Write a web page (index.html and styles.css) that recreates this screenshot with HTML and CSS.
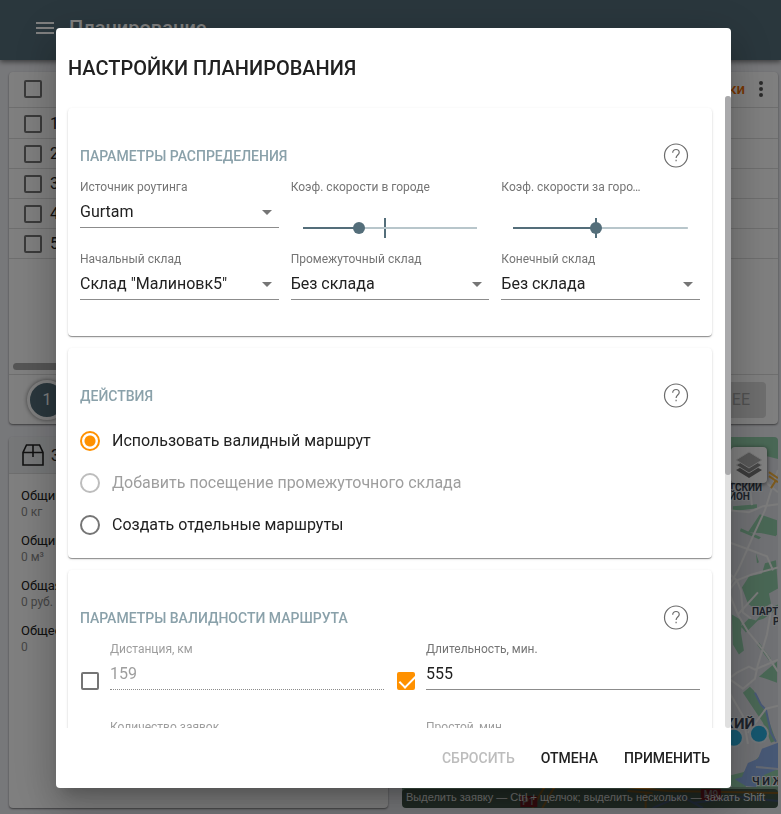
FILE: index.html
```html
<!DOCTYPE html>
<html lang="ru">
<head>
<meta charset="utf-8">
<meta name="viewport" content="width=device-width, initial-scale=1">
<title>Планирование</title>
<link rel="stylesheet" href="styles.css">
</head>
<body>
<div class="app">
  <header class="topbar">
    <button class="menu-button" type="button" aria-label="Меню"><span></span><span></span><span></span></button>
    <h1 class="topbar-title">Планирование</h1>
  </header>
  <main class="workspace">
    <section class="panel orders">
      <div class="orders-head">
        <input class="check" type="checkbox" aria-label="Выбрать все">
        <a class="orders-link" href="#">Заявки</a>
        <button class="more" type="button" aria-label="Ещё"><span></span><span></span><span></span></button>
      </div>
      <table class="orders-table">
        <tbody>
          <tr><td><input class="check" type="checkbox" aria-label="Заявка 1"></td><td>1</td></tr>
          <tr><td><input class="check" type="checkbox" aria-label="Заявка 2"></td><td>2</td></tr>
          <tr><td><input class="check" type="checkbox" aria-label="Заявка 3"></td><td>3</td></tr>
          <tr><td><input class="check" type="checkbox" aria-label="Заявка 4"></td><td>4</td></tr>
          <tr><td><input class="check" type="checkbox" aria-label="Заявка 5"></td><td>5</td></tr>
        </tbody>
      </table>
      <div class="orders-space"><div class="hbar"></div></div>
      <div class="orders-foot">
        <span class="step">1</span>
        <button class="next" type="button">ДАЛЕЕ</button>
      </div>
    </section>
    <div class="lower">
      <section class="panel summary">
        <div class="summary-head">
          <svg width="22" height="22" viewBox="0 0 22 22" fill="none" stroke="#222" stroke-width="1.600"><path d="M1 8.500V21h20V8.500L17.500 1h-13zM1 8.500h20M11 1v12"/></svg>
          <span>Заявки</span>
        </div>
        <dl class="totals">
          <div><dt>Общий вес</dt><dd>0 кг</dd></div>
          <div><dt>Общий объём</dt><dd>0 м³</dd></div>
          <div><dt>Общая стоимость</dt><dd>0 руб.</dd></div>
          <div><dt>Общее количество</dt><dd>0</dd></div>
        </dl>
      </section>
      <section class="map" aria-label="Карта">
        <svg class="map-art" viewBox="0 0 375 371" preserveAspectRatio="xMaxYMax slice">
          <rect width="375" height="371" fill="#e0e2e8"/>
          <g fill="#93cfaa">
            <path d="M300 0h75v23l-12-3-18-6-45 4z"/>
            <path d="M345 96l12-18 17 6v15l-14-2zM354 96l14-3 5-5v12zM330 70l24-2v4l-24 3z"/>
            <path d="M338 92l20 9-2 2-19-8zM346 140l13-3 3-10 11-3 2 28-9 5 2 10-13 8-10-8-6-16zM353 117l3 9-2 1z"/>
            <path d="M329 178l10 6-1 12 3 18-5 4-6-10zM338 190l8-8 7 2 9-10 13-6v4l-14 10-6 2-12 12zM356 206l12 16-2 2-12-16zM356 240l18-15v21l-11-4z"/>
            <path d="M347 250l4 4 12 22 10 28-5 2-8-20-12-18-8-12zM325 348l17 4 5-14 11-12 17-8v-8l-14 5-20 20-16 4zM362 333h13v20l-22-2z"/>
          </g>
          <path d="M332 342l7-2 6-14 10-4 4-10 16-6v26l-14 6-8 12-10-1-10-6z" fill="#8fb0ea"/>
          <path d="M329 346l14 4 6 5 8-6 4 10 12 3v9h-44z" fill="#93cfaa"/>
          <path d="M352 256l6 12 5 5 3 14 2 9 5 9" fill="none" stroke="#8fb0ea" stroke-width="2"/>
          <g fill="none" stroke="#f6f6f6" stroke-width="2">
            <path d="M326 150l10-18 14-32 12-26 10-32 3-8M326 74l20 2 14-6 15-2M337 32l10 20 2 17M357 26l8 22 10 8M326 106l22 8 16 6 6 14M326 137l8 7 4 10 2 22 8 6M326 154l8-10 15-6 26-7"/>
            <path d="M326 156l9 22 10 17 18 22 12 18M326 242l8-6 12-6 6 3 23-10M326 242l14 10 12-10 3-14 9-30 5-30M335 178l20-22M326 255l14 24 5 28M345 296l18-24 12-3"/>
            <path d="M326 356l15-4 18 7 16-2M353 330l22 2" stroke="#c9d3e5"/>
          </g>
          <g fill="none" stroke="#f5b23d" stroke-width="2"><path d="M366 36l9 6M366 40l9 6M368 52l5-8"/></g>
          <rect y="350" width="375" height="21" fill="#7fa58d"/>
          <g fill="none" stroke="#f3a83b" stroke-width="2"><path d="M130 371l12-21M140 371l12-21M225 350l40 4 110 2M243 355v16M225 354l25 2"/></g>
          <path d="M250 371l28-12 22 12M290 366l45-6 40 4" fill="none" stroke="#7fa3d8" stroke-width="2"/>
          <rect x="118" y="359" width="17" height="11" fill="#d22f3d"/><rect x="298" y="352" width="20" height="11" fill="#d22f3d"/>
          <g font-family="Roboto, sans-serif" font-weight="500" fill="#fff" font-size="10"><text x="120" y="368">P1</text><text x="301" y="361">M9</text></g>
          <g font-family="Roboto, sans-serif" font-weight="700" font-size="10" fill="#3b4554" stroke="#edf0f4" stroke-width="2" paint-order="stroke">
            <text x="359" y="55" text-anchor="end">СОВЕТСКИЙ</text><text x="347" y="64" text-anchor="end">РАЙОН</text>
            <text x="349" y="179">ПАРТИЗАНСКИЙ</text><text x="370" y="188">РАЙОН</text>
            <text x="352" y="292" font-size="15" text-anchor="end">МИНСКИЙ</text>
            <text x="349" y="348" font-size="11">Ч И Ж О В К А</text>
          </g>
          <g fill="#2aaede" stroke="#e3eaf0" stroke-width="2"><circle cx="331" cy="301" r="9"/><circle cx="356" cy="297" r="9"/></g>
        </svg>
        <button class="layers" type="button" aria-label="Слои">
          <svg width="28" height="28" viewBox="0 0 28 28"><path d="M1 19l13-7 13 7-13 8z" fill="#777"/><path d="M1 14l13-7 13 7-13 8z" fill="#8c8c8c" stroke="#eee" stroke-width="1"/><path d="M1 9l13-8 13 8-13 8z" fill="#b0b0b0" stroke="#eee" stroke-width="1"/></svg>
        </button>
        <p class="hint">Выделить заявку — Ctrl + щелчок; выделить несколько — зажать Shift</p>
      </section>
    </div>
  </main>
</div>

<div class="backdrop">
  <form class="dialog" role="dialog" aria-modal="true" aria-labelledby="dlg-title">
    <h2 class="dialog-title" id="dlg-title">НАСТРОЙКИ ПЛАНИРОВАНИЯ</h2>
    <div class="dialog-body">
      <div class="dialog-scroll">
        <section class="card">
          <div class="card-head"><h3>ПАРАМЕТРЫ РАСПРЕДЕЛЕНИЯ</h3>
            <button class="help" type="button" aria-label="Справка"><svg viewBox="0 0 26 26"><circle cx="13" cy="12.500" r="11.500"/><path d="M9.700 9.700c0-2 1.400-3.200 3.300-3.200s3.200 1.200 3.200 2.900c0 2.600-3.100 2.700-3.100 5.600M13.100 16.700v1.600"/></svg></button></div>
          <div class="grid3">
            <div class="field"><label for="routing">Источник роутинга</label><div class="select"><select id="routing"><option>Gurtam</option></select></div></div>
            <div class="field"><label for="city">Коэф. скорости в городе</label><div class="slider"><span class="tick"></span><input id="city" type="range" min="0" max="100" value="31" style="--fill:31%"></div></div>
            <div class="field"><label class="clip" for="out">Коэф. скорости за городом</label><div class="slider"><span class="tick"></span><input id="out" type="range" min="0" max="100" value="47" style="--fill:47%"></div></div>
            <div class="field"><label for="start">Начальный склад</label><div class="select"><select id="start"><option>Склад "Малиновк5"</option></select></div></div>
            <div class="field"><label for="mid">Промежуточный склад</label><div class="select"><select id="mid"><option>Без склада</option></select></div></div>
            <div class="field"><label for="end">Конечный склад</label><div class="select"><select id="end"><option>Без склада</option></select></div></div>
          </div>
        </section>
        <section class="card">
          <div class="card-head"><h3>ДЕЙСТВИЯ</h3>
            <button class="help" type="button" aria-label="Справка"><svg viewBox="0 0 26 26"><circle cx="13" cy="12.500" r="11.500"/><path d="M9.700 9.700c0-2 1.400-3.200 3.300-3.200s3.200 1.200 3.200 2.900c0 2.600-3.100 2.700-3.100 5.600M13.100 16.700v1.600"/></svg></button></div>
          <label class="radio"><input type="radio" name="action" checked>Использовать валидный маршрут</label>
          <label class="radio"><input type="radio" name="action" disabled>Добавить посещение промежуточного склада</label>
          <label class="radio"><input type="radio" name="action">Создать отдельные маршруты</label>
        </section>
        <section class="card">
          <div class="card-head"><h3>ПАРАМЕТРЫ ВАЛИДНОСТИ МАРШРУТА</h3>
            <button class="help" type="button" aria-label="Справка"><svg viewBox="0 0 26 26"><circle cx="13" cy="12.500" r="11.500"/><path d="M9.700 9.700c0-2 1.400-3.200 3.300-3.200s3.200 1.200 3.200 2.900c0 2.600-3.100 2.700-3.100 5.600M13.100 16.700v1.600"/></svg></button></div>
          <div class="grid2">
            <div class="limit"><input class="check" type="checkbox" aria-label="Ограничить дистанцию"><div class="field off"><label for="dist">Дистанция, км</label><input class="text" id="dist" value="159" disabled></div></div>
            <div class="limit"><input class="check" type="checkbox" checked aria-label="Ограничить длительность"><div class="field"><label for="dur">Длительность, мин.</label><input class="text" id="dur" value="555"></div></div>
            <div class="limit"><input class="check" type="checkbox" aria-label="Ограничить количество"><div class="field off"><label for="cnt">Количество заявок</label><input class="text" id="cnt" disabled></div></div>
            <div class="limit"><input class="check" type="checkbox" aria-label="Ограничить простой"><div class="field off"><label for="idle">Простой, мин.</label><input class="text" id="idle" disabled></div></div>
          </div>
        </section>
      </div>
      <div class="scrollbar"><div class="thumb"></div></div>
    </div>
    <div class="dialog-actions">
      <button type="reset" disabled>СБРОСИТЬ</button>
      <button type="button">ОТМЕНА</button>
      <button type="submit">ПРИМЕНИТЬ</button>
    </div>
  </form>
</div>
</body>
</html>
```

FILE: styles.css
```css
* { box-sizing: border-box; }
html, body { height: 100%; }
body { margin: 0; overflow: hidden; font-family: Roboto, "Noto Sans", sans-serif; font-size: 16px; color: #212121; background: #eff0f5; }
h1, h2, h3, p, dl, dd { margin: 0; }
button, input, select { font: inherit; color: inherit; margin: 0; }
button { border: 0; padding: 0; background: none; }

.app { display: flex; flex-direction: column; height: 100vh; }
.topbar { display: flex; align-items: center; flex: 0 0 60px; gap: 15px; padding: 0 36px 4px; background: #546e7a; box-shadow: 0 2px 5px rgba(0, 0, 0, .5); color: #fff; z-index: 1; }
.menu-button { display: grid; gap: 3px; width: 18px; }
.menu-button span { height: 2px; background: #fff; }
.topbar-title { font-size: 20px; font-weight: 500; line-height: 24px; }
.workspace { flex: 1; display: flex; flex-direction: column; gap: 13px; padding: 12px 3px 6px 9px; min-height: 0; }
.panel { background: #fff; border-radius: 4px; box-shadow: 0 1px 2px rgba(0, 0, 0, .5); overflow: hidden; }

.check { appearance: none; flex: none; display: block; width: 18px; height: 18px; border: 2px solid #757575; border-radius: 2px; background: #fff; }
.check:checked { border-color: #ff9100; background: #ff9100; position: relative; }
.check:checked::after { content: ""; position: absolute; left: 4px; top: -2px; width: 7px; height: 14px; border: solid #fff; border-width: 0 2px 2px 0; transform: rotate(45deg); }

.orders { display: flex; flex-direction: column; flex: 0 0 352px; }
.orders-head { display: flex; align-items: center; height: 36px; padding: 0 15px 1px; border-bottom: 1px solid #ddd; }
.orders-link { margin-left: auto; color: #ef6c00; font-size: 15px; font-weight: 500; text-decoration: none; }
.more { display: grid; gap: 2px; margin-left: 14px; width: 4px; }
.more span { height: 4px; border-radius: 50%; background: #555; }
.orders-table { border-collapse: collapse; width: 100%; }
.orders-table td { height: 30px; padding: 2px 0 0 8px; border-bottom: 1px solid #ddd; line-height: 20px; }
.orders-table td:first-child { width: 33px; padding-left: 15px; }
.orders-space { flex: 1; display: flex; align-items: flex-end; padding: 4px; }
.hbar { flex: 0 0 60%; height: 7px; border-radius: 4px; background: #aaa; }
.orders-foot { display: flex; align-items: center; justify-content: space-between; height: 50px; padding: 0 12px 0 18px; border-top: 1px solid #ddd; }
.step { display: grid; place-items: center; width: 40px; height: 40px; border: 3px solid #fff; border-radius: 50%; background: #546e7a; color: #fff; box-shadow: 0 0 4px rgba(0, 0, 0, .5); }
.next { height: 36px; padding: 0 16px; border-radius: 4px; background: #dcdcdc; color: #a3a3a3; }

.lower { flex: 1; display: grid; grid-template-columns: 379fr 376fr; gap: 14px; min-height: 0; }
.summary-head { display: flex; align-items: center; gap: 7px; height: 37px; padding: 0 13px; background: #eceff1; border-bottom: 1px solid #ddd; }
.totals { display: grid; gap: 11px; padding: 13px 12px; font-size: 13px; line-height: 17px; }
.totals dd { font-size: 12px; color: #8a8a8a; }
.map { position: relative; display: flex; border-radius: 4px; overflow: hidden; }
.map-art { width: 100%; height: 100%; }
.layers { position: absolute; top: 10px; right: 11px; display: grid; place-items: center; width: 36px; height: 36px; border-radius: 4px; background: #fff; box-shadow: 0 1px 5px rgba(0, 0, 0, .6); }
.hint { position: absolute; left: 0; right: 0; bottom: 0; height: 19px; padding: 0 4px; border-radius: 4px; background: rgba(0, 0, 0, .5); color: #e4e4e4; font: 11px/17px "Liberation Sans", sans-serif; white-space: nowrap; }

.backdrop { position: fixed; inset: 0; z-index: 10; display: flex; padding: 28px 50px 26px 56px; background: rgba(0, 0, 0, .5); }
.dialog { flex: 1; min-width: 0; display: flex; flex-direction: column; border-radius: 4px; background: #fff; box-shadow: 0 11px 15px -7px rgba(0, 0, 0, .2), 0 24px 38px 3px rgba(0, 0, 0, .14), 0 9px 46px 8px rgba(0, 0, 0, .12); }
.dialog-title { padding: 24px 12px 12px; font-size: 20px; font-weight: 500; line-height: 32px; }
.dialog-body { flex: 1; display: flex; min-height: 0; }
.dialog-scroll { flex: 1; min-width: 0; overflow: auto; scrollbar-width: none; display: flex; flex-direction: column; gap: 12px; padding: 12px 13px 12px 12px; }
.scrollbar { flex: 0 0 6px; border-radius: 3px; background: #e0e0e0; }
.thumb { height: 60%; border-radius: 3px; background: #a9a9ab; }
.card { flex: none; padding: 24px 12px 12px; border-radius: 4px; box-shadow: 0 2px 1px -1px rgba(0, 0, 0, .2), 0 1px 1px rgba(0, 0, 0, .24), 0 1px 3px rgba(0, 0, 0, .12); }
.card-head { display: flex; align-items: center; justify-content: space-between; height: 48px; }
.card-head h3 { font-size: 14px; line-height: 20px; font-weight: 500; color: #8aa1aa; }
.help { display: grid; place-items: center; width: 48px; height: 48px; }
.help svg { width: 26px; height: 26px; fill: none; stroke: #6b6b6b; stroke-width: 1.2; }

.grid3 { display: grid; grid-template-columns: repeat(3, minmax(0, 1fr)); column-gap: 12px; }
.grid3 .field { height: 72px; }
.field { flex: 1; min-width: 0; }
.field label { display: block; font-size: 12px; line-height: 14px; color: #757575; white-space: nowrap; }
.field .clip { width: 144px; overflow: hidden; text-overflow: ellipsis; }
.select { position: relative; height: 34px; border-bottom: 1px solid #8c8c8c; }
.select::after { content: ""; position: absolute; right: 7px; top: 16px; border: solid transparent; border-width: 5px 5px 0; border-top-color: #757575; pointer-events: none; }
.select select { appearance: none; width: 100%; height: 34px; padding: 0 20px 0 0; border: 0; background: none; }
.slider { position: relative; height: 34px; padding: 24px 12px 0; }
.slider input { appearance: none; display: block; position: relative; width: 100%; height: 20px; background: linear-gradient(to right, #546e7a var(--fill), #b8c6cb var(--fill)) center / 100% 2px no-repeat; }
.slider input::-webkit-slider-thumb { appearance: none; width: 12px; height: 12px; border-radius: 50%; background: #546e7a; }
.tick { position: absolute; left: 47%; top: 24px; width: 2px; height: 20px; background: #546e7a; }

.radio { display: flex; align-items: center; gap: 12px; height: 42px; line-height: 24px; }
.radio input { appearance: none; width: 20px; height: 20px; border: 2px solid #757575; border-radius: 50%; }
.radio input:checked { border-color: #ff9100; background: radial-gradient(circle, #ff9100 5px, transparent 6px); }
.radio input:disabled { border-color: #bdbdbd; }
.radio:has(:disabled) { color: #9e9e9e; }

.grid2 { display: grid; grid-template-columns: repeat(2, minmax(0, 1fr)); column-gap: 12px; row-gap: 30px; }
.limit { display: flex; align-items: flex-end; gap: 11px; height: 48px; padding-left: 1px; }
.text { display: block; width: 100%; height: 34px; padding: 1px 0 0; border: 0; border-bottom: 1px solid #8c8c8c; border-radius: 0; background: none; }
.text:disabled { color: #9e9e9e; border-bottom-style: dotted; }
.off label { color: #9e9e9e; }

.dialog-actions { display: flex; align-items: center; justify-content: flex-end; gap: 10px; height: 60px; padding-right: 13px; }
.dialog-actions button { height: 36px; padding: 0 8px; border-radius: 4px; font-size: 14px; font-weight: 500; }
.dialog-actions button:disabled { color: #bdbdbd; }
```
